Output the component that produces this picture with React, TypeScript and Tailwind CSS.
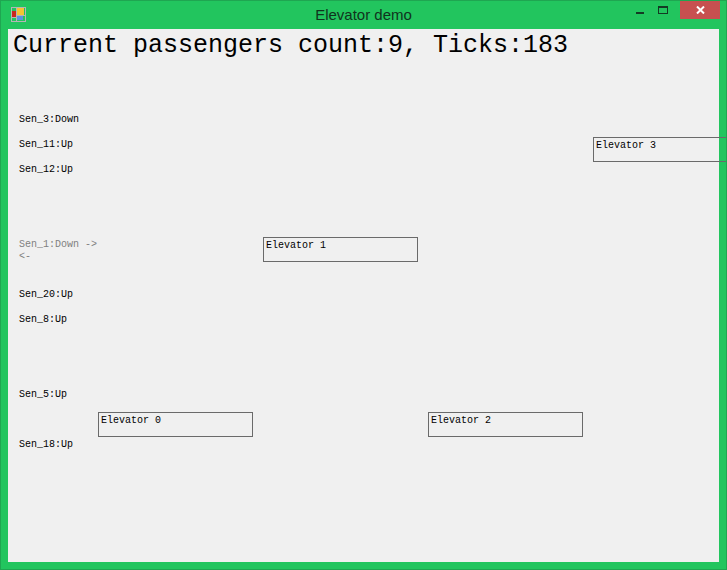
const mono = { fontFamily: '"Liberation Mono", "DejaVu Sans Mono", monospace' }

const floors: { row: number; label: string; dim?: boolean }[] = [
  { row: 2, label: 'Sen_3:Down' },
  { row: 3, label: 'Sen_11:Up' },
  { row: 4, label: 'Sen_12:Up' },
  { row: 7, label: 'Sen_1:Down ->', dim: true },
  { row: 9, label: 'Sen_20:Up' },
  { row: 10, label: 'Sen_8:Up' },
  { row: 13, label: 'Sen_5:Up' },
  { row: 15, label: 'Sen_18:Up' },
]

const elevators = [
  { name: 'Elevator 0', pos: 'left-[90px] top-[383px]' },
  { name: 'Elevator 1', pos: 'left-[255px] top-[208px]' },
  { name: 'Elevator 2', pos: 'left-[420px] top-[383px]' },
  { name: 'Elevator 3', pos: 'left-[585px] top-[108px]' },
]

export default function App() {
  return (
    <div className="flex flex-col w-[727px] h-[570px] overflow-hidden bg-[#22c55e] border border-[#1fa651]">
      <div className="flex items-center h-[28px] shrink-0 relative">
        <svg width="15" height="15" viewBox="0 0 15 15" className="ml-[10px] mt-[-2px]">
          <rect x="0.5" y="0.5" width="14" height="14" fill="none" stroke="#b5b5b5" />
          <path d="M0 10.5 H6 M5.5 0 V15 M6 8.5 H15" stroke="#b5b5b5" />
          <rect x="1" y="4" width="4" height="6" fill="#c8281e" />
          <rect x="6" y="1" width="7" height="7" fill="#f7c431" />
          <rect x="6" y="9" width="6" height="4" fill="#5b93dd" />
        </svg>
        <div
          className="absolute left-0 right-0 top-[6px] text-center text-[15px] leading-[16px] text-[#10331d]"
          style={{ fontFamily: '"Liberation Sans", sans-serif' }}
        >
          Elevator demo
        </div>
        <div className="ml-auto flex items-start self-start">
          <div className="w-[8px] h-[2px] bg-[#143a24] mt-[11px] mr-[14px]" />
          <div className="w-[10px] h-[8px] border border-[#143a24] border-t-[2px] mt-[5px] mr-[12px]" />
          <div className="w-[40px] h-[18px] bg-[#c75050] flex items-center justify-center text-white mr-[6px]">
            <svg width="9" height="8" viewBox="0 0 9 8">
              <path d="M1 0.5 L8 7.5 M8 0.5 L1 7.5" stroke="#fff" strokeWidth="2" />
            </svg>
          </div>
        </div>
      </div>

      <div className="relative mx-[7px] w-[711px] h-[533px] bg-[#f0f0f0] text-black" style={mono}>
        <div className="pl-[5px] pt-[3px] h-[27px] text-[25px] leading-[27px] whitespace-pre">
          Current passengers count:9, Ticks:183
        </div>
        <div className="pl-[11px] pt-[8px]">
          {Array.from({ length: 16 }, (_, row) => {
            const floor = floors.find((f) => f.row === row)
            return (
              <div
                key={row}
                className={`h-[25px] text-[10px] leading-[12px] whitespace-pre ${floor?.dim ? 'text-[#808080]' : ''}`}
              >
                {floor?.label}
                {floor?.dim && <div>{'<-'}</div>}
              </div>
            )
          })}
        </div>
        {elevators.map((e) => (
          <div
            key={e.name}
            className={`absolute w-[155px] h-[25px] border border-[#6a6a6a] pl-[2px] pt-[2px] text-[10px] leading-[12px] whitespace-pre ${e.pos}`}
          >
            {e.name}
          </div>
        ))}
      </div>
    </div>
  )
}
